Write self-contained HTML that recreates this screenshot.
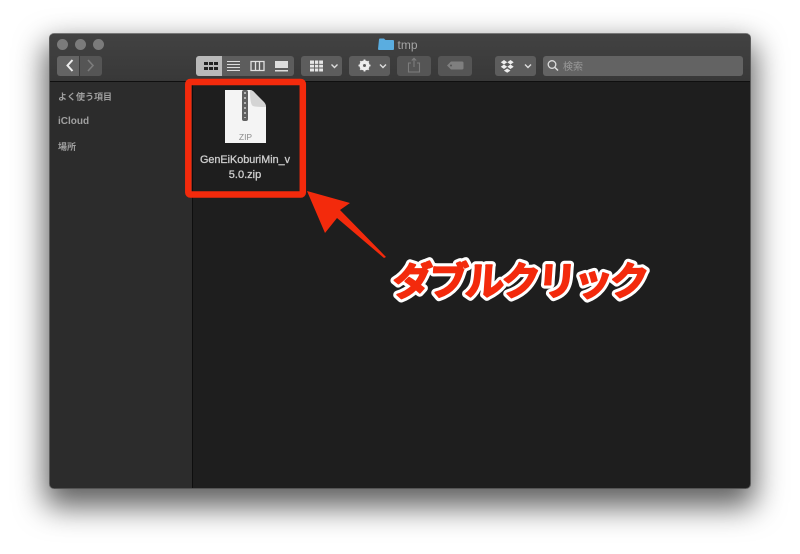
<!DOCTYPE html>
<html lang="ja"><head><meta charset="utf-8"><title>tmp</title>
<style>
html,body{margin:0;padding:0;background:#fff;width:800px;height:554px;overflow:hidden}
body{position:relative;font-family:"Liberation Sans","Noto Sans CJK JP",sans-serif}
.a{position:absolute}
#shadow{left:49px;top:33px;width:702px;height:456px;border-radius:6px;box-shadow:0 14px 30px 4px rgba(0,0,0,.62)}
#win{left:49px;top:33px;width:700px;height:454px;border:1px solid #5c5c5c;border-top-color:#777;border-bottom-color:#555;border-radius:5px;background:#1e1e1e;overflow:hidden;filter:blur(.3px)}
#tb{left:0;top:0;width:700px;height:47px;background:linear-gradient(#424242,#383838);border-bottom:1px solid #0f0f0f}
#sb{left:0;top:48px;width:142px;height:406px;background:#2c2c2c;border-right:1px solid #0e0e0e}
.dot{width:11px;height:11px;border-radius:50%;background:#7b7b7b;top:5px}
.btn{background:#5d5d5d;border-radius:3px;height:20px;top:22px}
.side{left:8px;color:#a0a0a0;font-size:9px;font-weight:bold}
</style></head><body>
<div class="a" id="shadow"></div>
<div class="a" id="win">
 <div class="a" id="tb"></div>
 <div class="a" id="sb"></div>
 <div class="a dot" style="left:7px"></div>
 <div class="a dot" style="left:25px"></div>
 <div class="a dot" style="left:43px"></div>
 <div class="a btn" style="left:7px;width:22px;border-radius:3px 0 0 3px;background:#646464"></div>
 <div class="a btn" style="left:30px;width:22px;border-radius:0 3px 3px 0;background:#555"></div>
 <div class="a btn" style="left:146px;width:98px"></div>
 <div class="a btn" style="left:146px;width:26px;background:#b9b9b9;border-radius:3px 0 0 3px"></div>
 <div class="a btn" style="left:251px;width:41px"></div>
 <div class="a btn" style="left:299px;width:41px"></div>
 <div class="a btn" style="left:347px;width:34px;background:#555"></div>
 <div class="a btn" style="left:388px;width:34px;background:#555"></div>
 <div class="a btn" style="left:445px;width:41px"></div>
 <div class="a btn" style="left:493px;width:200px;background:#636363"></div>
 <div class="a side" style="top:56px">よく使う項目</div>
 <div class="a side" style="top:82px;font-size:10px">iCloud</div>
 <div class="a side" style="top:106px">場所</div>
</div>
<svg class="a" style="left:0;top:0;filter:blur(.3px)" width="800" height="554" viewBox="0 0 800 554" font-family="'Liberation Sans','Noto Sans CJK JP',sans-serif">
 <!-- nav chevrons -->
 <path d="M72.500 60l-5 5.500 5 5.500" fill="none" stroke="#eee" stroke-width="2"/>
 <path d="M88 60l5 5.500-5 5.500" fill="none" stroke="#7c7c7c" stroke-width="1.600"/>
 <!-- icon view -->
 <path d="M204 62h4v3h-4zM209 62h4v3h-4zM214 62h4v3h-4zM204 67h4v3h-4zM209 67h4v3h-4zM214 67h4v3h-4z" fill="#222"/>
 <!-- list view -->
 <path d="M227 61.500h13M227 64.500h13M227 67.500h13M227 70.500h13" stroke="#dcdcdc" stroke-width="1"/>
 <!-- column view -->
 <path d="M251 61.500h13v9h-13zM255.500 61.500v9M259.500 61.500v9" fill="none" stroke="#e0e0e0" stroke-width="1.300"/>
 <!-- gallery view -->
 <path d="M275 61h13v7h-13z" fill="#ddd"/><path d="M275 70h13v1.500h-13z" fill="#ddd"/>
 <!-- group -->
 <path d="M310 60.500h13v11h-13z" fill="#e6e6e6"/><path d="M310 64.300h13M310 68h13M314.500 60v12M318.700 60v12" stroke="#5d5d5d" stroke-width=".9"/>
 <path d="M331.500 64.500l3 3 3-3" fill="none" stroke="#ddd" stroke-width="1.400"/>
 <!-- gear -->
 <circle cx="364.500" cy="65.500" r="3.800" fill="none" stroke="#eee" stroke-width="2.600"/>
 <path d="M364.500 59.500v12M358.500 65.500h12M360.300 61.300l8.400 8.400M368.700 61.300l-8.400 8.400" stroke="#eee" stroke-width="1.800"/>
 <circle cx="364.500" cy="65.500" r="1.500" fill="#5d5d5d"/>
 <path d="M380 64.500l3 3 3-3" fill="none" stroke="#ddd" stroke-width="1.400"/>
 <!-- share -->
 <path d="M411 63h-2.500v9h11v-9H417M414 67v-8.500M411.800 60.500l2.200-2.200 2.200 2.200" fill="none" stroke="#7d7d7d" stroke-width="1.100"/>
 <!-- tag -->
 <path d="M451 61.500h11q1.500 0 1.500 1.500v5q0 1.500-1.500 1.500h-11l-4-4z" fill="#7f7f7f"/><circle cx="451" cy="65.500" r="1" fill="#555"/>
 <!-- dropbox -->
 <path d="M504 60l3.200 2.200-3.200 2.300-3.200-2.300zM510.500 60l3.200 2.200-3.200 2.300-3.200-2.300zM504 64.500l3.200 2.200-3.200 2.300-3.200-2.300zM510.500 64.500l3.200 2.200-3.200 2.300-3.200-2.300zM507.200 68.500l3.300 2.100-3.300 2.200-3.300-2.200z" fill="#eee"/>
 <path d="M525 64.500l3 3 3-3" fill="none" stroke="#ddd" stroke-width="1.400"/>
 <!-- search -->
 <circle cx="552" cy="64.500" r="3.800" fill="none" stroke="#ddd" stroke-width="1.300"/>
 <path d="M555 67.500l3 3" stroke="#ddd" stroke-width="1.500"/>
 <text x="563" y="70" font-size="10" fill="#9a9a9a">検索</text>
 <!-- title -->
 <path d="M379 39.500q0-1 1-1h4l1.500 1.500h7.500q1 0 1 1v8q0 1-1 1h-14q-1 0-1-1z" fill="#5aade0"/>
 <text x="397.500" y="49" font-size="12" fill="#a5a5a5">tmp</text>
 <!-- zip file -->
 <path d="M225 90h25q2 0 4 2l10 11q2 2 2 4v36h-41z" fill="#f4f4f4"/>
 <path d="M250 90q0 15 3 16t13 1q0-3-2-5l-10-10q-2-2-4-2z" fill="#d4d4d4"/>
 <rect x="242" y="90" width="6" height="31" rx="2" fill="#5f5f5f"/>
 <path d="M245 92v26" stroke="#cfcfcf" stroke-width="1.500" stroke-dasharray="2 3"/>
 <text x="245.500" y="140" font-size="8.500" fill="#8d8d8d" text-anchor="middle">ZIP</text>
 <text x="200" y="163" font-size="11" textLength="90" lengthAdjust="spacingAndGlyphs" fill="#cfcfcf" stroke="#cfcfcf" stroke-width=".3">GenEiKoburiMin_v</text>
 <text x="245" y="178" font-size="11" text-anchor="middle" fill="#cfcfcf" stroke="#cfcfcf" stroke-width=".3">5.0.zip</text>
 <!-- red box -->
 <rect x="188.300" y="82" width="114.500" height="112.500" rx="2" fill="none" stroke="#f32a0c" stroke-width="6.500"/>
 <!-- arrow -->
 <path d="M307 191L350 203 340 210 386 257 384 258 337 218 325 233z" fill="#f32a0c"/>
 <!-- label -->
 <g transform="translate(390,295) skewX(-4)" font-family="'Noto Sans CJK JP',sans-serif" font-size="39" font-weight="bold">
 <text x="2" y="0" textLength="256" lengthAdjust="spacing" fill="#fff" stroke="#fff" stroke-width="8" stroke-linejoin="round">ダブルクリック</text>
 <text x="2" y="0" textLength="256" lengthAdjust="spacing" fill="#f32a0c" stroke="#f32a0c" stroke-width="1.800" stroke-linejoin="round">ダブルクリック</text>
 </g>
</svg>
</body></html>
